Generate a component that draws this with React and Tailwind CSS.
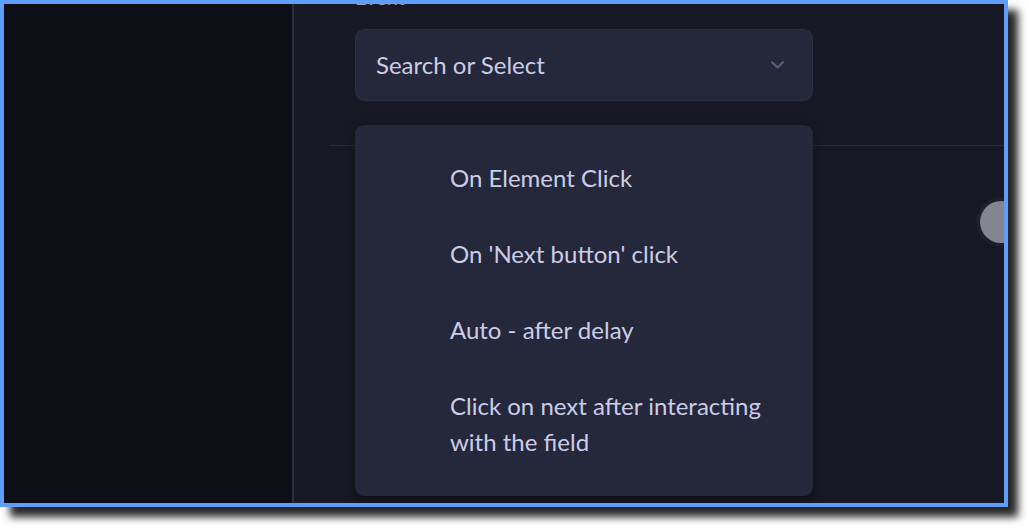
import React from "react";

export default function App() {
  const items = [
    "On Element Click",
    "On 'Next button' click",
    "Auto - after delay",
    "Click on next after interacting with the field",
  ];
  return (
    <div
      className="w-[1028px] h-[528px] bg-white overflow-hidden"
      style={{ fontFamily: "Lato, 'Noto Sans', sans-serif" }}
    >
      <div className="w-[1008px] h-[507px] border-4 border-[#5f9dfb] shadow-[10px_10px_8px_rgba(0,0,0,0.85)] flex overflow-hidden">
        <div className="w-[290px] shrink-0 h-full bg-[#0e0e17] border-r-2 border-[#2c2d41]" />
        <div className="relative flex-1 h-full bg-[#181824] overflow-hidden">
          <div className="pl-[61px] w-[519px] -mt-[21px]">
            <div className="text-[20px] leading-[28px] text-[#9a9bb4] mb-[18px]">Event</div>
            <div className="h-[72px] rounded-[10px] bg-[#25273b] border border-[#2d2f45] flex items-center justify-between pl-[20px] pr-[28px]">
              <span className="text-[24px] text-[#cbcde7]">Search or Select</span>
              <svg width="13" height="8" viewBox="0 0 13 8" fill="none">
                <path d="M1 1.2L6.5 6.5L12 1.2" stroke="#5c5e80" strokeWidth="2" strokeLinecap="round" strokeLinejoin="round" />
              </svg>
            </div>
          </div>
          <div className="ml-[36px] mt-[44px] h-[1px] bg-[#282839]" />
          <div className="flex justify-end mt-[51px] -mr-[22px]">
            <div className="w-[50px] h-[50px] rounded-full bg-[#1f1f2b] flex items-center justify-center">
              <div className="w-[42px] h-[42px] rounded-full bg-[#85858f]" />
            </div>
          </div>
          <div className="absolute left-[61px] top-[121px] w-[458px] rounded-[9px] bg-[#25273b] shadow-[0_4px_10px_rgba(0,0,0,0.35)] pt-[15px] pb-[16px] pl-[95px] pr-[40px]">
            {items.map((t) => (
              <div key={t} className="py-[20px] text-[24px] leading-[36px] text-[#cbcde7]">
                {t}
              </div>
            ))}
          </div>
        </div>
      </div>
    </div>
  );
}
